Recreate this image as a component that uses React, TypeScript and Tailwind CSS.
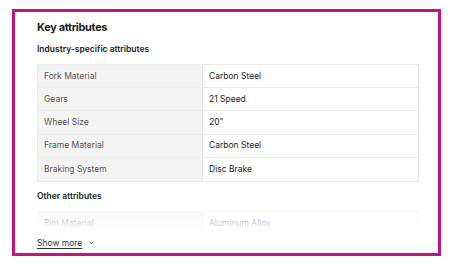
import React from "react";

const rows: [string, string][] = [
  ["Fork Material", "Carbon Steel"],
  ["Gears", "21 Speed"],
  ["Wheel Size", "20\""],
  ["Frame Material", "Carbon Steel"],
  ["Braking System", "Disc Brake"],
];

function Row({ k, v, last }: { k: string; v: string; last?: boolean }) {
  return (
    <div className={`flex h-[23.2px] ${last ? "" : "border-b border-[#ebebeb]"}`}>
      <div className="w-[165px] shrink-0 bg-[#f4f4f4] border-r border-[#e6e6e6] pl-[6px] flex items-center text-[#555]">
        {k}
      </div>
      <div className="flex-1 pl-[6px] flex items-center text-[#222]">{v}</div>
    </div>
  );
}

export default function App() {
  return (
    <div
      className="pt-[9px] pl-[12px] bg-white w-[456px] h-[269px]"
      style={{ fontFamily: "Inter, 'Noto Sans', sans-serif" }}
    >
      <div className="w-[429px] h-[247px] border-[3px] border-[#c4127f] bg-white overflow-hidden pl-[22px] pr-[19px] pt-[8px]">
        <div className="text-[11px] leading-[15px] font-bold tracking-[-0.35px] text-[#222]">
          Key attributes
        </div>
        <div className="mt-[8px] text-[8.5px] leading-[12px] font-semibold text-[#222]">
          Industry-specific attributes
        </div>
        <div className="mt-[9px] border border-[#ebebeb] text-[8.5px] w-[382px]">
          {rows.map(([k, v], i) => (
            <Row key={k} k={k} v={v} last={i === rows.length - 1} />
          ))}
        </div>
        <div className="mt-[8px] text-[8.5px] leading-[12px] font-semibold text-[#222]">
          Other attributes
        </div>
        <div className="relative mt-[9px] h-[16px] overflow-hidden w-[382px]">
          <div className="border border-[#ebebeb] text-[8.5px]">
            <Row k="Rim Material" v="Aluminum Alloy" last />
          </div>
          <div className="absolute inset-0 bg-gradient-to-b from-white/50 to-white/85" />
        </div>
        <div className="mt-[10px] flex items-center gap-[6px] text-[8.5px] leading-[12px] text-[#333]">
          <span className="underline underline-offset-2">Show more</span>
          <svg width="7" height="7" viewBox="0 0 8 8" fill="none">
            <path d="M1.5 3 L4 5.5 L6.5 3" stroke="#333" strokeWidth="1" />
          </svg>
        </div>
      </div>
    </div>
  );
}
